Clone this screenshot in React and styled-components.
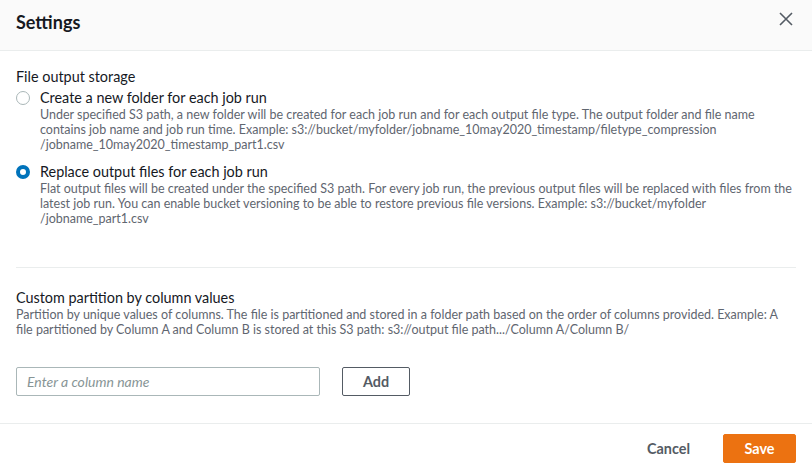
import styled, { createGlobalStyle } from "styled-components";

const GlobalStyle = createGlobalStyle`
	body {
		margin: 0;
		background: #ffffff;
		font-family: Lato, "Open Sans", sans-serif;
		color: #16191f;
	}
`;

const Modal = styled.div`
	width: 812px;
	height: 472px;
	display: flex;
	flex-direction: column;
	background: #ffffff;
`;

const Header = styled.div`
	height: 51px;
	box-sizing: border-box;
	display: flex;
	align-items: flex-start;
	justify-content: space-between;
	padding: 10px 16px 0 16px;
	background: #fafafa;
	border-bottom: 1px solid #eaeded;

	.title {
		font-size: 18px;
		font-weight: 700;
		line-height: 24px;
	}

	.close {
		border: none;
		background: none;
		padding: 0;
		margin: 2px 3px 0 0;
		cursor: pointer;
		color: #545b64;
		display: flex;
	}
`;

const Body = styled.div`
	flex: 1;
	padding: 0 16px;
`;

const Section = styled.div`
	padding: ${(p) => p.$pad};
	border-bottom: ${(p) => (p.$divider ? "1px solid #eaeded" : "none")};
`;

const Heading = styled.div`
	font-size: 14.4px;
	line-height: 18px;
	color: #16191f;
`;

const Description = styled.div`
	font-size: 12.5px;
	line-height: 15px;
	color: #5f6670;
	margin-top: ${(p) => p.$mt || "0"};
`;

const RadioRow = styled.label`
	display: grid;
	grid-template-columns: 14px 1fr;
	column-gap: 10px;
	margin-top: ${(p) => p.$mt};
	cursor: pointer;

	.label {
		font-size: 14.4px;
		line-height: 18px;
		color: #16191f;
	}
`;

const RadioDot = styled.span`
	width: 14px;
	height: 14px;
	box-sizing: border-box;
	border-radius: 50%;
	margin-top: 2px;
	background: #ffffff;
	border: ${(p) => (p.$checked ? "4px solid #0073bb" : "1px solid #aab7b8")};
`;

const InputRow = styled.div`
	display: flex;
	align-items: center;
	gap: 22px;
	margin-top: 30px;
`;

const TextInput = styled.input`
	width: 304px;
	height: 29px;
	box-sizing: border-box;
	border: 1px solid #aab7b8;
	border-radius: 2px;
	padding: 0 10px;
	font-family: Lato, "Open Sans", sans-serif;
	font-size: 14px;
	color: #16191f;
	outline: none;

	&::placeholder {
		color: #879596;
		font-style: italic;
	}
`;

const Button = styled.button`
	height: 29px;
	box-sizing: border-box;
	border-radius: 2px;
	font-family: Lato, "Open Sans", sans-serif;
	font-size: 14.4px;
	font-weight: 700;
	cursor: pointer;
	padding: 0 ${(p) => p.$px || "20px"};
	border: 1px solid ${(p) => (p.$variant === "primary" ? "#ec7211" : p.$variant === "link" ? "transparent" : "#545b64")};
	background: ${(p) => (p.$variant === "primary" ? "#ec7211" : "#ffffff")};
	color: ${(p) => (p.$variant === "primary" ? "#ffffff" : "#545b64")};
	min-width: ${(p) => p.$w || "auto"};
`;

const Footer = styled.div`
	height: 49px;
	box-sizing: border-box;
	border-top: 1px solid #eaeded;
	display: flex;
	align-items: flex-start;
	justify-content: flex-end;
	gap: 12px;
	padding: 10px 16px 0 16px;
`;

const App = () => {
	return (
		<>
			<GlobalStyle />
			<Modal>
				<Header>
					<span className="title">Settings</span>
					<button className="close" aria-label="Close">
						<svg width="14" height="14" viewBox="0 0 14 14">
							<path d="M1 1 L13 13 M13 1 L1 13" stroke="currentColor" strokeWidth="1.6" fill="none" />
						</svg>
					</button>
				</Header>
				<Body>
					<Section $pad="17px 0 41px 0" $divider>
						<Heading>File output storage</Heading>
						<RadioRow $mt="3px">
							<RadioDot />
							<div>
								<div className="label">Create a new folder for each job run</div>
								<Description>
									Under specified S3 path, a new folder will be created for each job run and for each output file type. The output folder and file name contains job name and job run time. Example: s3://bucket/myfolder/jobname_10may2020_timestamp/filetype_compression
									<br />/jobname_10may2020_timestamp_part1.csv
								</Description>
							</div>
						</RadioRow>
						<RadioRow $mt="11px">
							<RadioDot $checked />
							<div>
								<div className="label">Replace output files for each job run</div>
								<Description>
									Flat output files will be created under the specified S3 path. For every job run, the previous output files will be replaced with files from the latest job run. You can enable bucket versioning to be able to restore previous file versions. Example: s3://bucket/myfolder
									<br />/jobname_part1.csv
								</Description>
							</div>
						</RadioRow>
					</Section>
					<Section $pad="21px 0 0 0">
						<Heading>Custom partition by column values</Heading>
						<Description>
							Partition by unique values of columns. The file is partitioned and stored in a folder path based on the order of columns provided. Example: A file partitioned by Column A and Column B is stored at this S3 path: s3://output file path.../Column A/Column B/
						</Description>
						<InputRow>
							<TextInput placeholder="Enter a column name" />
							<Button $px="0" $w="68px">Add</Button>
						</InputRow>
					</Section>
				</Body>
				<Footer>
					<Button $variant="link" $px="20px">Cancel</Button>
					<Button $variant="primary" $w="73px">Save</Button>
				</Footer>
			</Modal>
		</>
	);
};

export default App;
